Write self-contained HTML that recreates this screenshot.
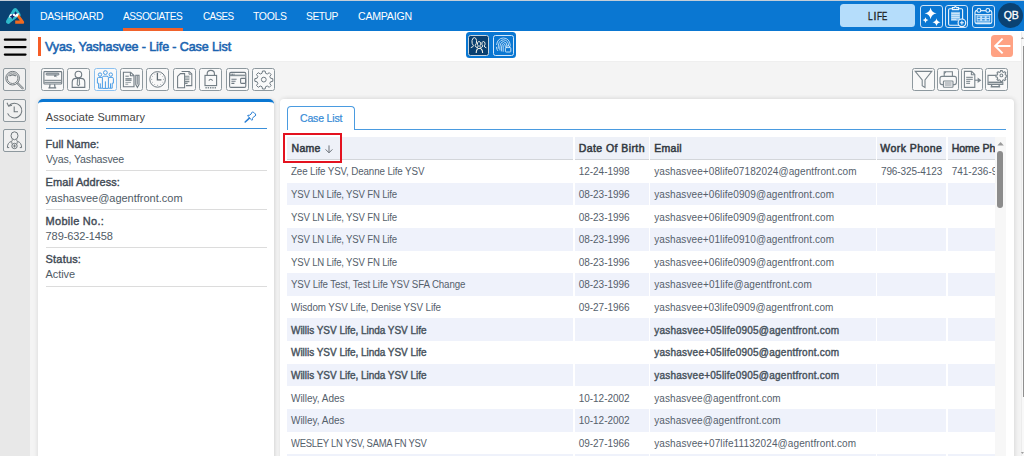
<!DOCTYPE html>
<html>
<head>
<meta charset="utf-8">
<style>
*{box-sizing:border-box;margin:0;padding:0}
html,body{width:1024px;height:456px;overflow:hidden;background:#f4f4f4;font-family:"Liberation Sans",sans-serif;position:relative}
.a{position:absolute}
.t{position:absolute;white-space:nowrap;line-height:1;font-family:"Liberation Sans",sans-serif}
svg{position:absolute;overflow:visible}
.tb{position:absolute;width:23px;height:23px;border:1.3px solid #8d989e;border-top-width:1.8px;border-bottom-width:1.8px;border-radius:2.5px;background:#f9f9f9;top:68.2px}
.sb{position:absolute;width:23px;height:23px;border:1.2px solid #8d989e;border-top-width:1.8px;border-bottom-width:1.8px;border-radius:2px;background:#f0f0f0;left:3px}
.cell{position:absolute}
</style>
</head>
<body>
<!-- top strip + nav -->
<div class="a" style="left:0;top:0;width:1024px;height:1px;background:#c4ced8"></div>
<div class="a" style="left:0;top:1px;width:1024px;height:30px;background:#0a77d2"></div>
<div class="a" style="left:0;top:1px;width:30px;height:30px;background:#0a4273"></div>
<!-- logo -->
<svg style="left:0;top:0" width="30" height="31" viewBox="0 0 30 31">
  <path d="M8.2 21.6 L14.6 10.8 Q15.2 9.8 15.8 10.8 L18.4 15" stroke="#2fbacb" stroke-width="4.4" fill="none" stroke-linecap="round" stroke-linejoin="round"/>
  <path d="M7.4 20.8 L9.4 17 L17.6 16.4 L15.6 18.2 L12 20.8 L9.2 22.8 Z" fill="#2fbacb" stroke="#2fbacb" stroke-width="1" stroke-linejoin="round"/>
  <path d="M18.4 13.8 L24 21.4 Q24.6 23.8 22.6 23.8 H15.2 V20.4 H19.8 L16.9 16.4 Z" fill="#f26b1f"/>
  <path d="M8.8 17.4 L10 14.2 L19 13.2 L17.8 16.4 Z" fill="#ffffff"/>
  <path d="M12.3 13.8 Q12.6 16.2 15 16.6 Q12.6 17 12.3 19.4 Q12 17 9.6 16.6 Q12 16.2 12.3 13.8Z" fill="#13246b"/>
  <path d="M15.6 10.9 Q15.8 12.8 17.6 13.1 Q15.8 13.4 15.6 15.3 Q15.4 13.4 13.6 13.1 Q15.4 12.8 15.6 10.9Z" fill="#13246b"/>
</svg>
<!-- active underline -->
<div class="a" style="left:123.4px;top:28px;width:59.4px;height:3px;background:#f0622c"></div>
<!-- LIFE pill -->
<div class="a" style="left:839.7px;top:3.7px;width:75.5px;height:23.4px;background:#b5ddfb;border-radius:3.5px"></div>
<div class="t" style="left:867.7px;top:11px;font-size:10.5px;color:#1f1f1f;-webkit-text-stroke:0.3px #1f1f1f;transform:scaleX(0.8);transform-origin:0 0">L</div>
<div class="t" style="left:873.4px;top:11px;font-size:10.5px;color:#1f1f1f;-webkit-text-stroke:0.3px #1f1f1f">I</div>
<div class="t" style="left:876.7px;top:11px;font-size:10.5px;color:#1f1f1f;-webkit-text-stroke:0.3px #1f1f1f;transform:scaleX(0.8);transform-origin:0 0">F</div>
<div class="t" style="left:882.4px;top:11px;font-size:10.5px;color:#1f1f1f;-webkit-text-stroke:0.3px #1f1f1f;transform:scaleX(0.75);transform-origin:0 0">E</div>
<!-- nav icon buttons -->
<div class="a" style="left:920.2px;top:4.6px;width:23.2px;height:23.3px;border:1.2px solid #cfe4f8;border-radius:3px"></div>
<div class="a" style="left:945.4px;top:4.6px;width:22.9px;height:23.3px;border:1.2px solid #cfe4f8;border-radius:3px"></div>
<div class="a" style="left:972px;top:4.6px;width:22.8px;height:23.3px;border:1.2px solid #cfe4f8;border-radius:3px"></div>
<svg style="left:920.2px;top:4.6px" width="23" height="23" viewBox="0 0 23 23">
  <path d="M10.6 2.4 Q11.4 7.4 16.6 8.2 Q11.4 9 10.6 14.2 Q9.8 9 4.6 8.2 Q9.8 7.4 10.6 2.4Z" fill="#fff"/>
  <path d="M5.5 12.2 Q5.9 14.7 8.4 15.1 Q5.9 15.5 5.5 18 Q5.1 15.5 2.6 15.1 Q5.1 14.7 5.5 12.2Z" fill="#fff"/>
  <path d="M16.5 13.2 Q17 16.6 20.6 17.2 Q17 17.8 16.5 21.2 Q16 17.8 12.4 17.2 Q16 16.6 16.5 13.2Z" fill="#fff"/>
</svg>
<svg style="left:945.4px;top:4.6px" width="23" height="23" viewBox="0 0 23 23" fill="none" stroke="#eef6fd" stroke-width="1.1">
  <rect x="3.6" y="3.8" width="14" height="16.4" rx="1.2"/>
  <path d="M7.4 4.6 V2.6 H9.4 Q10.4 0.6 11.4 2.6 H13.6 V4.6 Z" fill="#0a77d2"/>
  <rect x="6" y="6.8" width="9" height="9" fill="#8cc4f0" stroke="none"/>
  <path d="M6.4 8.4h8.2M6.4 10.4h8.2M6.4 12.4h8.2M6.4 14.4h5" stroke="#e6f3fd" stroke-width="0.8"/>
  <circle cx="16.9" cy="17.8" r="3.8" fill="#0a77d2" stroke-width="1.2"/>
  <path d="M16.9 15.8v4M14.9 17.8h4" stroke-width="1.1"/>
</svg>
<svg style="left:972px;top:4.6px" width="23" height="23" viewBox="0 0 23 23" fill="none" stroke="#eaf4fd" stroke-width="1.1">
  <rect x="3" y="5.6" width="16.8" height="13" rx="1.8"/>
  <path d="M3.2 9.6 H19.6" stroke-width="1"/>
  <path d="M5.4 5.6 H17.4" stroke="#0a77d2" stroke-width="1.4"/>
  <path d="M8.8 5.6 H13.9" stroke-width="1"/>
  <circle cx="6.9" cy="5.4" r="1.9" fill="#0a77d2"/>
  <circle cx="15.8" cy="5.4" r="1.9" fill="#0a77d2"/>
  <rect x="4.6" y="10.4" width="13.6" height="6.2" fill="#bfe0fa" stroke="none"/>
  <path d="M5.6 11.4h2.6v1.6h-2.6zM10.1 11.4h2.6v1.6h-2.6zM14.6 11.4h2.6v1.6h-2.6zM5.6 14h2.6v1.6h-2.6zM10.1 14h2.6v1.6h-2.6zM14.6 14h2.6v1.6h-2.6z" fill="#3d94de" stroke="none"/>
  <path d="M4.2 17.8 H18.6" stroke-width="1.2" stroke="#bfe0fa"/>
</svg>
<!-- QB -->
<div class="a" style="left:998.2px;top:3.2px;width:25.2px;height:25.2px;border-radius:50%;background:#0a4273"></div>

<!-- sidebar -->
<div class="a" style="left:0;top:31px;width:30px;height:425px;background:#e8e8e8"></div>
<svg style="left:0;top:31px" width="30" height="30" viewBox="0 31 30 30">
  <path d="M4.9 39.7 H25.5 M4.9 47.05 H25.5 M4.9 54.6 H25.5" stroke="#000" stroke-width="2.3" stroke-linecap="round"/>
</svg>
<div class="sb" style="top:68px"></div>
<div class="sb" style="top:98.6px"></div>
<div class="sb" style="top:129px"></div>
<svg style="left:3px;top:68px" width="23" height="23" viewBox="0 0 23 23" fill="none" stroke="#6f777c" stroke-width="1">
  <circle cx="9.6" cy="10.2" r="6.8"/>
  <circle cx="9.6" cy="10.2" r="5.3" stroke-width="0.9"/>
  <path d="M6.4 8 Q9.6 5.6 12.8 8" stroke-width="1.3"/>
  <path d="M14.6 15.2 L19.6 20.2" stroke-width="2.2" stroke-linecap="round"/>
  <path d="M14.6 15.2 L19.6 20.2" stroke-width="0.8" stroke="#f2f2f2" stroke-linecap="round"/>
</svg>
<svg style="left:3px;top:98.6px" width="23" height="23" viewBox="0 0 23 23" fill="none" stroke="#6f777c" stroke-width="1.05">
  <path d="M5.6 7 A7.4 7.4 0 1 1 4.6 14.4"/>
  <path d="M4 3.8 L5.6 7.2 L9 6.2"/>
  <path d="M11.2 7.4 V12.8 H15"/>
</svg>
<svg style="left:3px;top:129px" width="23" height="23" viewBox="0 0 23 23" fill="none" stroke="#6f777c" stroke-width="1">
  <path d="M11.5 2.8 Q15 2.8 15 6.8 Q15 10.2 11.5 10.8 Q8 10.2 8 6.8 Q8 2.8 11.5 2.8 Z"/>
  <path d="M9.2 10.4 Q9.4 12 8.6 12.4 Q4.4 13.4 4.4 18.6 H6.2"/>
  <path d="M13.8 10.4 Q13.6 12 14.4 12.4 Q18.6 13.4 18.6 18.6 H16.8"/>
  <path d="M8.8 12.6 Q8.6 14.6 9.4 15.4 M14.2 12.6 Q14.4 14.6 13.6 15.4" stroke-width="0.9"/>
  <circle cx="11.5" cy="17" r="2.7"/>
  <path d="M11.5 15.4v3.2M9.9 17h3.2" stroke-width="0.9"/>
</svg>

<!-- title bar -->
<div class="a" style="left:30px;top:31px;width:994px;height:30px;background:#ffffff;box-shadow:0 0.5px 1.5px rgba(0,0,0,0.06)"></div>
<div class="a" style="left:37.8px;top:36.8px;width:3.2px;height:19px;background:#f65d27"></div>
<!-- center switch -->
<div class="a" style="left:465.5px;top:32.3px;width:50.6px;height:25.5px;background:#0a77d2;border-radius:3.5px"></div>
<div class="a" style="left:468.1px;top:34.8px;width:20.9px;height:20.9px;background:#093f70;border:1.1px solid #c8d4de;border-radius:2.5px"></div>
<div class="a" style="left:492.8px;top:34.8px;width:21px;height:20.9px;background:#0a77d2;border:1.1px solid #d4e8fa;border-radius:2.5px"></div>
<svg style="left:468.1px;top:34.8px" width="21" height="21" viewBox="0 0 21 21" fill="none" stroke="#f4f1e6" stroke-width="1">
  <path d="M2.8 12.6 Q5.2 12.2 5.4 10.6 Q3.6 8.6 4 5.6 Q4.6 2.6 6.4 2.6 Q8.2 2.8 8.6 5.6 Q8.8 8.6 7.2 10.6 Q7.4 12.2 9.4 12.6"/>
  <path d="M8.8 12.8 Q10.4 12.2 10.2 10.9 Q9 9.4 9.6 7.7 Q10.2 6.3 11.2 6.5 Q12.4 6.7 12.6 8.3 Q12.8 9.9 11.8 10.9 Q11.8 12.2 13 12.6"/>
  <path d="M13.2 12.6 Q14.6 12.2 14.6 10.9 Q13.4 9.4 14 7.7 Q14.6 6.3 15.6 6.5 Q16.8 6.7 17 8.3 Q17.2 9.9 16.2 10.9 Q16.2 12.2 18.4 12.8"/>
  <path d="M8.2 18 Q8.2 13.4 11.4 13.2 Q14.6 13.4 14.6 18" stroke-width="1.1"/>
</svg>
<svg style="left:492.8px;top:34.8px" width="21" height="21" viewBox="0 0 21 21" fill="none" stroke="#d6ebfc" stroke-width="0.85" stroke-linecap="round">
  <path d="M3.6 9.6 Q4.4 3.2 10.4 3 Q16.4 3.2 17.2 9.6"/>
  <path d="M3.4 12.2 Q3.6 14.4 4.6 15.6"/>
  <path d="M5.2 13.4 Q4.8 5.2 10.4 4.8 Q15.6 5.2 15.6 10.6"/>
  <path d="M6.8 15 Q6.4 7 10.4 6.6 Q14 7 14 10.8"/>
  <path d="M8.4 16 Q8.2 8.8 10.4 8.6 Q12.4 8.8 12.4 11.6"/>
  <path d="M10.2 16.4 V10.6"/>
  <path d="M16.4 12.2 Q16.6 10.8 17.2 10.4" />
  <rect x="12.4" y="12.6" width="5.4" height="4.4" rx="0.7" fill="#0a77d2" stroke-width="0.9"/>
  <path d="M13.4 12.6 V11.6 Q15.1 9.8 16.8 11.6 V12.6" stroke-width="0.9"/>
</svg>
<!-- back button -->
<div class="a" style="left:990.9px;top:34.6px;width:22.4px;height:22.5px;background:#ffa283;border-radius:3.5px"></div>
<svg style="left:990.9px;top:34.6px" width="22" height="22" viewBox="0 0 22 22" fill="none" stroke="#ffffff" stroke-width="2">
  <path d="M19.4 11 H4"/>
  <path d="M11.6 3.6 L4.2 11 L11.6 18.4"/>
</svg>
<!-- page scrollbar -->
<div class="a" style="left:1021px;top:32px;width:3px;height:424px;background:#f8f8f8;border-left:0.6px solid #ececec"></div>
<div class="a" style="left:1022.8px;top:45.8px;width:1.6px;height:351px;background:#8f8f8f"></div>
<svg style="left:1020px;top:34px" width="4" height="8" viewBox="0 0 4 8"><path d="M2.4 3 L4 5 L0.8 5 Z" fill="#a0a0a0"/></svg>
<svg style="left:1020px;top:448px" width="4" height="8" viewBox="0 0 4 8"><path d="M2.4 6 L4 4 L0.8 4 Z" fill="#a0a0a0"/></svg>

<!-- toolbar buttons -->
<div class="tb" style="left:40.8px"></div>
<div class="tb" style="left:67.2px"></div>
<div class="tb" style="left:93.6px;border-color:#8cc0ee"></div>
<div class="tb" style="left:120px"></div>
<div class="tb" style="left:146.4px"></div>
<div class="tb" style="left:172.8px"></div>
<div class="tb" style="left:199.2px"></div>
<div class="tb" style="left:225.6px"></div>
<div class="tb" style="left:252px"></div>
<!-- icons -->
<svg style="left:40.8px;top:68.2px" width="23" height="23" viewBox="0 0 23 23" fill="none" stroke="#6f7a82" stroke-width="1.1">
  <rect x="2.9" y="3.6" width="17.8" height="12.4" rx="0.8"/>
  <path d="M3.2 12.4 H20.4 M3.2 14.4 H20.4" stroke-width="1.2" stroke="#8a949a"/>
  <rect x="5" y="5.2" width="13" height="1.8" rx="0.9" stroke-width="1" fill="#c9ced2"/>
  <path d="M13.8 7.4 L15.6 9.2 M13.8 7.4 v1.6 M13.8 7.4 h1.6" stroke-width="1"/>
  <path d="M9 16.2 L8.6 19.6 M13.6 16.2 L14 19.6 M7.4 19.8 H15.2" stroke-width="1.2"/>
</svg>
<svg style="left:67.2px;top:68.2px" width="23" height="23" viewBox="0 0 23 23" fill="none" stroke="#6f7a82" stroke-width="1.1">
  <circle cx="11.4" cy="6.6" r="3.3"/>
  <path d="M5.2 19.4 V14.2 Q5.2 10.4 9.2 10.4 H13.8 Q17.8 10.4 17.8 14.2 V19.4 Z"/>
  <path d="M10.6 10.8 L10.2 16.6 L11.4 17.8 L12.6 16.6 L12.2 10.8" stroke="#7f8a90"/>
</svg>
<svg style="left:93.6px;top:68.2px" width="23" height="23" viewBox="0 0 23 23" fill="none" stroke="#4a9de6" stroke-width="1">
  <circle cx="11.4" cy="4.6" r="1.9"/>
  <circle cx="6" cy="6.6" r="1.7"/>
  <circle cx="16.8" cy="6.6" r="1.7"/>
  <path d="M8.4 20.4 V9.6 Q8.4 8.2 9.8 8.2 H13 Q14.4 8.2 14.4 9.6 V20.4 H8.4 M11.4 13.4 V20.4"/>
  <path d="M8 9.4 H4.6 Q3.4 9.4 3.4 10.8 V15.2 H4.6 V20.2 H8 M6.3 15.4 V20.2"/>
  <path d="M14.8 9.4 H18.2 Q19.4 9.4 19.4 10.8 V15.2 H18.2 V20.2 H14.8 M16.5 15.4 V20.2"/>
</svg>
<svg style="left:120px;top:68.2px" width="23" height="23" viewBox="0 0 23 23" fill="none" stroke="#6f7a82" stroke-width="1.1">
  <path d="M3.4 4.2 H10.6 L14 7.6 V18.8 H3.4 Z"/>
  <path d="M10.4 4.4 V7.8 H13.8"/>
  <path d="M5.4 8.2 H8.8" stroke-width="1"/>
  <path d="M5.4 10.6 H11.6 M5.4 12.2 H11.6" stroke="#8a949a" stroke-width="1.4"/>
  <path d="M5.4 14.4 H11" stroke="#9aa3a8" stroke-width="1"/>
  <path d="M5.4 16.2 H8.2" stroke="#8a949a" stroke-width="1"/>
  <path d="M15.8 7.2 H19 V16.6 L17.4 19.4 L15.8 16.6 Z"/>
  <path d="M17.4 7.4 V16.6" stroke-width="0.8"/>
</svg>
<svg style="left:146.4px;top:68.2px" width="23" height="23" viewBox="0 0 23 23" fill="none" stroke="#6f7a82" stroke-width="1">
  <circle cx="11.6" cy="11.4" r="7.8"/>
  <path d="M11.6 4.8 v1.2 M11.6 16.8 v1.2 M5 11.4 h1.2 M17 11.4 h1.2 M8.3 5.7 l0.5 0.9 M14.9 5.7 l-0.5 0.9 M8.3 17.1 l0.5 -0.9 M14.9 17.1 l-0.5 -0.9 M5.9 8.1 l0.9 0.5 M17.3 8.1 l-0.9 0.5 M5.9 14.7 l0.9 -0.5 M17.3 14.7 l-0.9 -0.5" stroke-width="0.8" stroke="#8f989e"/>
  <path d="M11.4 4.8 V11.8 H15.4" stroke-width="1.3" stroke="#5f6b73"/>
</svg>
<svg style="left:172.8px;top:68.2px" width="23" height="23" viewBox="0 0 23 23" fill="none" stroke="#6f7a82" stroke-width="1.05">
  <path d="M8.6 3.4 H16.2 L18.8 6 V17.6 H13"/>
  <path d="M16 3.6 V6.2 H18.6" stroke-width="0.9"/>
  <path d="M4.6 8.4 L7.4 5.6 H11.6 V19.8 H4.6 Z" fill="#fbfbfb"/>
  <path d="M11.8 8.2 H16.4 M11.8 10 H16.6 M11.8 11.8 H16.4 M11.8 13.6 H16.4 M11.8 15.4 H14.6" stroke-width="1.1" stroke="#7f8a90"/>
</svg>
<svg style="left:199.2px;top:68.2px" width="23" height="23" viewBox="0 0 23 23" fill="none" stroke="#6f7a82" stroke-width="1.1">
  <path d="M8.2 7.4 V5.6 Q8.2 2.4 11.8 2.4 Q15.4 2.4 15.4 5.6 V7.4"/>
  <rect x="6" y="7.4" width="11.6" height="10.2"/>
  <path d="M9.8 12.6 Q11.7 9.8 13.6 12.6"/>
  <path d="M6.4 19.7 H17.4" stroke-dasharray="1.4 0.9" stroke-width="1.4" stroke="#7f8a90"/>
</svg>
<svg style="left:225.6px;top:68.2px" width="23" height="23" viewBox="0 0 23 23" fill="none" stroke="#6f7a82" stroke-width="1.1">
  <rect x="3.6" y="4.4" width="16.2" height="15" rx="1.4"/>
  <path d="M3.8 7.4 H19.6" stroke-width="1.6" stroke="#8a949a"/>
  <path d="M5 5.6 v1.8 M6.4 5.6 v1.8 M8 5.6 v1.8" stroke-width="0.9"/>
  <path d="M5.4 11.2 H10.6 M5.4 13.2 H9.6 M5.4 15.4 H8.4" stroke-width="1.1"/>
  <rect x="14.6" y="10.4" width="5" height="5" rx="0.8"/>
</svg>
<svg style="left:252px;top:68.2px" width="23" height="23" viewBox="0 0 23 23" fill="none" stroke="#6f7a82" stroke-width="1">
  <path d="M10.5 3 h2.6 l0.5 2.3 l1.7 0.7 l2 -1.3 l1.8 1.8 l-1.3 2 l0.7 1.7 l2.3 0.5 v2.6 l-2.3 0.5 l-0.7 1.7 l1.3 2 l-1.8 1.8 l-2 -1.3 l-1.7 0.7 l-0.5 2.3 h-2.6 l-0.5 -2.3 l-1.7 -0.7 l-2 1.3 l-1.8 -1.8 l1.3 -2 l-0.7 -1.7 l-2.3 -0.5 v-2.6 l2.3 -0.5 l0.7 -1.7 l-1.3 -2 l1.8 -1.8 l2 1.3 l1.7 -0.7 Z" stroke-linejoin="round"/>
  <circle cx="11.8" cy="11.6" r="2.4"/>
</svg>
<!-- right toolbar -->
<div class="tb" style="left:911.9px;width:23px"></div>
<div class="tb" style="left:936.6px;width:22.4px"></div>
<div class="tb" style="left:960.9px;width:22.4px"></div>
<div class="tb" style="left:985.3px;width:22.7px"></div>
<svg style="left:911.9px;top:68.2px" width="23" height="23" viewBox="0 0 23 23" fill="none" stroke="#7a858c" stroke-width="1.1">
  <path d="M3.2 3.4 H19.8 L13 12 V19.4 L10.2 17.6 V12 Z"/>
</svg>
<svg style="left:936.6px;top:68.2px" width="23" height="23" viewBox="0 0 23 23" fill="none" stroke="#7a858c" stroke-width="1.1">
  <path d="M7.2 8.4 V3.8 H15.4 V8.4"/>
  <path d="M7.2 5.6 L8.8 3.8"/>
  <rect x="3" y="8.4" width="16.4" height="8.2" rx="2"/>
  <rect x="6.4" y="13" width="9.6" height="6.2" rx="0.8" fill="#f9f9f9"/>
  <path d="M7.8 15 H14.6 M7.8 17 H14.6" stroke-width="0.9"/>
</svg>
<svg style="left:960.9px;top:68.2px" width="23" height="23" viewBox="0 0 23 23" fill="none" stroke="#7a858c" stroke-width="1.1">
  <path d="M3.4 3.4 H10.6 L13.8 6.6 V19.4 H3.4 Z"/>
  <path d="M10.4 3.6 V6.8 H13.6"/>
  <path d="M5.2 9.4 H11.8 M5.2 11.4 H11.8 M5.2 13.4 H9.2 M5.2 15.4 H9" stroke-width="1.1" stroke="#8a949a"/>
  <path d="M13.8 12.2 H18.6"/>
  <path d="M17.2 10.6 L19.4 12.2 L17.2 13.8 Z" fill="#7a858c"/>
</svg>
<svg style="left:985.3px;top:68.2px" width="23" height="23" viewBox="0 0 23 23" fill="none" stroke="#7a858c" stroke-width="1.1">
  <path d="M13 7.4 H3 V16.4 H17.8 V13.6"/>
  <path d="M3.2 14.4 H17.6" stroke-width="1.6"/>
  <path d="M6.6 16.4 V18.6 H14.2 V16.4 M5.6 18.8 H15.2" stroke-width="1.3"/>
  <path d="M15.6 2.6 h1.6 l0.3 1.3 l1 0.5 l1.2 -0.7 l1.1 1.1 l-0.7 1.2 l0.5 1 l1.3 0.3 v1.6 l-1.3 0.3 l-0.5 1 l0.7 1.2 l-1.1 1.1 l-1.2 -0.7 l-1 0.5 l-0.3 1.3 h-1.6 l-0.3 -1.3 l-1 -0.5 l-1.2 0.7 l-1.1 -1.1 l0.7 -1.2 l-0.5 -1 l-1.3 -0.3 v-1.6 l1.3 -0.3 l0.5 -1 l-0.7 -1.2 l1.1 -1.1 l1.2 0.7 l1 -0.5 Z" fill="#f9f9f9"/>
  <circle cx="16.4" cy="7.4" r="1.4"/>
</svg>

<!-- left panel -->
<div class="a" style="left:37.7px;top:98.9px;width:236.6px;height:400px;background:#fff;border-top:3.6px solid #0a77d2;border-radius:5px 5px 0 0;box-shadow:-1px 0 4px rgba(0,0,0,0.09), 2px 0 3px rgba(0,0,0,0.07)"></div>
<svg style="left:244px;top:111px" width="13" height="12" viewBox="0 0 13 12" fill="none" stroke="#2a7fd4" stroke-width="1">
  <path d="M7.6 1.6 Q8.6 0.6 9.8 1.4 L11.4 3 Q12.2 4.2 11.2 5 L9.8 5.6 L8.4 7.6 L8.6 8.8 L7.8 9.2 L3.6 5 L4 4.2 L5.2 4.4 L7.2 3 Z"/>
  <path d="M5.4 7.2 L1.2 11" stroke-width="1.6" stroke-linecap="round"/>
</svg>
<div class="a" style="left:45.6px;top:127.9px;width:221.4px;height:1.3px;background:#3a8fd9"></div>
<div class="a" style="left:45.6px;top:170.4px;width:221px;height:1px;background:#dcdcdc"></div>
<div class="a" style="left:45.6px;top:208.8px;width:221px;height:1px;background:#dcdcdc"></div>
<div class="a" style="left:45.6px;top:247.2px;width:221px;height:1px;background:#dcdcdc"></div>
<div class="a" style="left:45.6px;top:285.6px;width:221px;height:1px;background:#dcdcdc"></div>

<!-- main panel -->
<div class="a" style="left:280px;top:99px;width:733.5px;height:400px;background:#fff;border-radius:4px 4px 0 0;box-shadow:0 -1px 4px rgba(0,0,0,0.065), 2px 0 5px rgba(0,0,0,0.06)"></div>
<!-- tab -->
<div class="a" style="left:287px;top:106px;width:68px;height:24px;border:1.5px solid #4a9be0;border-bottom:none;border-radius:4px 4px 0 0;background:#fff"></div>
<div class="a" style="left:354px;top:128.7px;width:652px;height:1.5px;background:#4a9be0"></div>

<!-- table -->
<div class="a" style="left:287px;top:137px;width:285.80px;height:23px;background:#eef1f8;border-bottom:1px solid #d3d6da"></div>
<div class="a" style="left:574.8px;top:137px;width:73.90px;height:23px;background:#eef1f8;border-bottom:1px solid #d3d6da"></div>
<div class="a" style="left:650.3px;top:137px;width:225.80px;height:23px;background:#eef1f8;border-bottom:1px solid #d3d6da"></div>
<div class="a" style="left:877.4px;top:137px;width:69.10px;height:23px;background:#eef1f8;border-bottom:1px solid #d3d6da"></div>
<div class="a" style="left:948.3px;top:137px;width:46.30px;height:23px;background:#eef1f8;border-bottom:1px solid #d3d6da"></div>
<div class="a" style="left:287px;top:182.630px;width:285.80px;height:22.63px;background:#eff2fb"></div>
<div class="a" style="left:574.8px;top:182.630px;width:73.90px;height:22.63px;background:#eff2fb"></div>
<div class="a" style="left:650.3px;top:182.630px;width:225.80px;height:22.63px;background:#eff2fb"></div>
<div class="a" style="left:877.4px;top:182.630px;width:69.10px;height:22.63px;background:#eff2fb"></div>
<div class="a" style="left:948.3px;top:182.630px;width:46.30px;height:22.63px;background:#eff2fb"></div>
<div class="a" style="left:287px;top:227.890px;width:285.80px;height:22.63px;background:#eff2fb"></div>
<div class="a" style="left:574.8px;top:227.890px;width:73.90px;height:22.63px;background:#eff2fb"></div>
<div class="a" style="left:650.3px;top:227.890px;width:225.80px;height:22.63px;background:#eff2fb"></div>
<div class="a" style="left:877.4px;top:227.890px;width:69.10px;height:22.63px;background:#eff2fb"></div>
<div class="a" style="left:948.3px;top:227.890px;width:46.30px;height:22.63px;background:#eff2fb"></div>
<div class="a" style="left:287px;top:273.150px;width:285.80px;height:22.63px;background:#eff2fb"></div>
<div class="a" style="left:574.8px;top:273.150px;width:73.90px;height:22.63px;background:#eff2fb"></div>
<div class="a" style="left:650.3px;top:273.150px;width:225.80px;height:22.63px;background:#eff2fb"></div>
<div class="a" style="left:877.4px;top:273.150px;width:69.10px;height:22.63px;background:#eff2fb"></div>
<div class="a" style="left:948.3px;top:273.150px;width:46.30px;height:22.63px;background:#eff2fb"></div>
<div class="a" style="left:287px;top:318.410px;width:285.80px;height:22.63px;background:#eff2fb"></div>
<div class="a" style="left:574.8px;top:318.410px;width:73.90px;height:22.63px;background:#eff2fb"></div>
<div class="a" style="left:650.3px;top:318.410px;width:225.80px;height:22.63px;background:#eff2fb"></div>
<div class="a" style="left:877.4px;top:318.410px;width:69.10px;height:22.63px;background:#eff2fb"></div>
<div class="a" style="left:948.3px;top:318.410px;width:46.30px;height:22.63px;background:#eff2fb"></div>
<div class="a" style="left:287px;top:363.670px;width:285.80px;height:22.63px;background:#eff2fb"></div>
<div class="a" style="left:574.8px;top:363.670px;width:73.90px;height:22.63px;background:#eff2fb"></div>
<div class="a" style="left:650.3px;top:363.670px;width:225.80px;height:22.63px;background:#eff2fb"></div>
<div class="a" style="left:877.4px;top:363.670px;width:69.10px;height:22.63px;background:#eff2fb"></div>
<div class="a" style="left:948.3px;top:363.670px;width:46.30px;height:22.63px;background:#eff2fb"></div>
<div class="a" style="left:287px;top:408.930px;width:285.80px;height:22.63px;background:#eff2fb"></div>
<div class="a" style="left:574.8px;top:408.930px;width:73.90px;height:22.63px;background:#eff2fb"></div>
<div class="a" style="left:650.3px;top:408.930px;width:225.80px;height:22.63px;background:#eff2fb"></div>
<div class="a" style="left:877.4px;top:408.930px;width:69.10px;height:22.63px;background:#eff2fb"></div>
<div class="a" style="left:948.3px;top:408.930px;width:46.30px;height:22.63px;background:#eff2fb"></div>
<div class="a" style="left:287px;top:454.190px;width:285.80px;height:22.63px;background:#eff2fb"></div>
<div class="a" style="left:574.8px;top:454.190px;width:73.90px;height:22.63px;background:#eff2fb"></div>
<div class="a" style="left:650.3px;top:454.190px;width:225.80px;height:22.63px;background:#eff2fb"></div>
<div class="a" style="left:877.4px;top:454.190px;width:69.10px;height:22.63px;background:#eff2fb"></div>
<div class="a" style="left:948.3px;top:454.190px;width:46.30px;height:22.63px;background:#eff2fb"></div>
<svg style="left:0;top:0" width="1024" height="456" viewBox="0 0 1024 456">
  <path d="M329 145.4 V152.8 M325.6 149.4 L329 152.8 L332.4 149.4" stroke="#6b7178" stroke-width="1" fill="none"/>
</svg>
<!-- red annotation box -->
<div class="a" style="left:283.2px;top:133px;width:58.6px;height:29.9px;border:2.8px solid #e3121f"></div>
<!-- table scrollbar -->
<div class="a" style="left:994.7px;top:137px;width:11px;height:320px;background:#f7f7f7"></div>
<svg style="left:994.7px;top:140px" width="11" height="8" viewBox="0 0 11 8"><path d="M2.4 5.4 L5.6 2 L8.8 5.4 Z" fill="#9a9a9a"/></svg>
<div class="a" style="left:997.1px;top:150.7px;width:6.4px;height:57.5px;background:#8c8c8c;border-radius:3.2px"></div>

<div class="t" style="transform:scaleX(0.9504);transform-origin:0 0;left:40.30px;top:11.00px;font-size:11px;font-weight:400;color:#ffffff;letter-spacing:-0.366px;">DASHBOARD</div>
<div class="t" style="transform:scaleX(0.9218);transform-origin:0 0;left:123.40px;top:11.00px;font-size:11px;font-weight:400;color:#ffffff;letter-spacing:-0.504px;">ASSOCIATES</div>
<div class="t" style="transform:scaleX(0.8981);transform-origin:0 0;left:203.00px;top:11.00px;font-size:11px;font-weight:400;color:#ffffff;letter-spacing:-0.690px;">CASES</div>
<div class="t" style="transform:scaleX(0.9506);transform-origin:0 0;left:253.00px;top:11.00px;font-size:11px;font-weight:400;color:#ffffff;letter-spacing:-0.349px;">TOOLS</div>
<div class="t" style="transform:scaleX(0.9318);transform-origin:0 0;left:306.00px;top:11.00px;font-size:11px;font-weight:400;color:#ffffff;letter-spacing:-0.469px;">SETUP</div>
<div class="t" style="transform:scaleX(0.9636);transform-origin:0 0;left:357.80px;top:11.00px;font-size:11px;font-weight:400;color:#ffffff;letter-spacing:-0.254px;">CAMPAIGN</div>
<div class="t" style="left:1003.70px;top:10.00px;font-size:10.5px;font-weight:400;-webkit-text-stroke:0.3px #ffffff;color:#ffffff;letter-spacing:0.014px;">QB</div>
<div class="t" style="transform:scaleX(0.9791);transform-origin:0 0;left:45.30px;top:41.00px;font-size:12.8px;font-weight:400;-webkit-text-stroke:0.55px #1b64b0;color:#1b64b0;letter-spacing:-0.117px;">Vyas, Yashasvee - Life - Case List</div>
<div class="t" style="left:45.80px;top:112.00px;font-size:11px;font-weight:400;color:#444444;letter-spacing:0.087px;">Associate Summary</div>
<div class="t" style="left:45.60px;top:139.00px;font-size:11px;font-weight:400;-webkit-text-stroke:0.4px #3f4a55;color:#3f4a55;letter-spacing:0.041px;">Full Name:</div>
<div class="t" style="transform:scaleX(0.9661);transform-origin:0 0;left:45.60px;top:154.00px;font-size:11px;font-weight:400;color:#505b66;letter-spacing:-0.183px;">Vyas, Yashasvee</div>
<div class="t" style="left:45.60px;top:177.00px;font-size:11px;font-weight:400;-webkit-text-stroke:0.4px #3f4a55;color:#3f4a55;letter-spacing:0.066px;">Email Address:</div>
<div class="t" style="left:45.60px;top:193.00px;font-size:11px;font-weight:400;color:#505b66;letter-spacing:-0.006px;">yashasvee@agentfront.com</div>
<div class="t" style="left:45.60px;top:216.00px;font-size:11px;font-weight:400;-webkit-text-stroke:0.4px #3f4a55;color:#3f4a55;letter-spacing:0.260px;">Mobile No.:</div>
<div class="t" style="left:45.60px;top:231.00px;font-size:11px;font-weight:400;color:#505b66;letter-spacing:-0.101px;">789-632-1458</div>
<div class="t" style="left:45.60px;top:254.00px;font-size:11px;font-weight:400;-webkit-text-stroke:0.4px #3f4a55;color:#3f4a55;letter-spacing:0.179px;">Status:</div>
<div class="t" style="left:45.60px;top:269.00px;font-size:11px;font-weight:400;color:#505b66;letter-spacing:-0.078px;">Active</div>
<div class="t" style="transform:scaleX(0.9584);transform-origin:0 0;left:300.00px;top:113.00px;font-size:11px;font-weight:400;-webkit-text-stroke:0.2px #358ad6;color:#358ad6;letter-spacing:-0.203px;">Case List</div>
<div class="t" style="left:291.50px;top:143.00px;font-size:10.5px;font-weight:400;-webkit-text-stroke:0.5px #333a42;color:#333a42;letter-spacing:0.296px;">Name</div>
<div class="t" style="left:578.70px;top:143.00px;font-size:10.5px;font-weight:400;-webkit-text-stroke:0.5px #333a42;color:#333a42;letter-spacing:0.431px;">Date Of Birth</div>
<div class="t" style="left:654.20px;top:143.00px;font-size:10.5px;font-weight:400;-webkit-text-stroke:0.5px #333a42;color:#333a42;letter-spacing:0.307px;">Email</div>
<div class="t" style="left:880.30px;top:143.00px;font-size:10.5px;font-weight:400;-webkit-text-stroke:0.5px #333a42;color:#333a42;letter-spacing:0.441px;">Work Phone</div>
<div class="a" style="left:949px;top:141.00px;width:45.5px;height:16.5px;overflow:hidden"><div class="t" style="left:2.70px;top:2px;font-size:10.5px;font-weight:400;-webkit-text-stroke:0.5px #333a42;color:#333a42;letter-spacing:0.000px;">Home Phone</div></div>
<div class="t" style="transform:scaleX(0.9758);transform-origin:0 0;left:291.00px;top:167.00px;font-size:10px;font-weight:400;color:#55606b;letter-spacing:-0.114px;">Zee Life YSV, Deanne Life YSV</div>
<div class="t" style="left:578.70px;top:167.00px;font-size:10px;font-weight:400;color:#55606b;letter-spacing:-0.026px;">12-24-1998</div>
<div class="t" style="left:654.20px;top:167.00px;font-size:10px;font-weight:400;color:#55606b;letter-spacing:0.092px;">yashasvee+08life07182024@agentfront.com</div>
<div class="t" style="left:880.90px;top:167.00px;font-size:10px;font-weight:400;color:#55606b;letter-spacing:-0.073px;">796-325-4123</div>
<div class="a" style="left:949px;top:165.00px;width:45.5px;height:16px;overflow:hidden"><div class="t" style="left:2.70px;top:2px;font-size:10px;font-weight:400;color:#55606b;letter-spacing:0.000px;">741-236-9874</div></div>
<div class="t" style="transform:scaleX(0.9593);transform-origin:0 0;left:291.00px;top:190.00px;font-size:10px;font-weight:400;color:#55606b;letter-spacing:-0.187px;">YSV LN Life, YSV FN Life</div>
<div class="t" style="left:578.70px;top:190.00px;font-size:10px;font-weight:400;color:#55606b;letter-spacing:-0.026px;">08-23-1996</div>
<div class="t" style="left:654.20px;top:190.00px;font-size:10px;font-weight:400;color:#55606b;letter-spacing:0.096px;">yashasvee+06life0909@agentfront.com</div>
<div class="t" style="transform:scaleX(0.9593);transform-origin:0 0;left:291.00px;top:213.00px;font-size:10px;font-weight:400;color:#55606b;letter-spacing:-0.187px;">YSV LN Life, YSV FN Life</div>
<div class="t" style="left:578.70px;top:213.00px;font-size:10px;font-weight:400;color:#55606b;letter-spacing:-0.026px;">08-23-1996</div>
<div class="t" style="left:654.20px;top:213.00px;font-size:10px;font-weight:400;color:#55606b;letter-spacing:0.096px;">yashasvee+06life0909@agentfront.com</div>
<div class="t" style="transform:scaleX(0.9593);transform-origin:0 0;left:291.00px;top:235.00px;font-size:10px;font-weight:400;color:#55606b;letter-spacing:-0.187px;">YSV LN Life, YSV FN Life</div>
<div class="t" style="left:578.70px;top:235.00px;font-size:10px;font-weight:400;color:#55606b;letter-spacing:-0.026px;">08-23-1996</div>
<div class="t" style="left:654.20px;top:235.00px;font-size:10px;font-weight:400;color:#55606b;letter-spacing:0.096px;">yashasvee+01life0910@agentfront.com</div>
<div class="t" style="transform:scaleX(0.9593);transform-origin:0 0;left:291.00px;top:258.00px;font-size:10px;font-weight:400;color:#55606b;letter-spacing:-0.187px;">YSV LN Life, YSV FN Life</div>
<div class="t" style="left:578.70px;top:258.00px;font-size:10px;font-weight:400;color:#55606b;letter-spacing:-0.026px;">08-23-1996</div>
<div class="t" style="left:654.20px;top:258.00px;font-size:10px;font-weight:400;color:#55606b;letter-spacing:0.096px;">yashasvee+06life0909@agentfront.com</div>
<div class="t" style="transform:scaleX(0.9729);transform-origin:0 0;left:291.00px;top:280.00px;font-size:10px;font-weight:400;color:#55606b;letter-spacing:-0.125px;">YSV Life Test, Test Life YSV SFA Change</div>
<div class="t" style="left:578.70px;top:280.00px;font-size:10px;font-weight:400;color:#55606b;letter-spacing:-0.026px;">08-23-1996</div>
<div class="t" style="left:654.20px;top:280.00px;font-size:10px;font-weight:400;color:#55606b;letter-spacing:0.106px;">yashasvee+01life@agentfront.com</div>
<div class="t" style="transform:scaleX(0.9809);transform-origin:0 0;left:291.00px;top:303.00px;font-size:10px;font-weight:400;color:#55606b;letter-spacing:-0.091px;">Wisdom YSV Life, Denise YSV Life</div>
<div class="t" style="left:578.70px;top:303.00px;font-size:10px;font-weight:400;color:#55606b;letter-spacing:-0.026px;">09-27-1966</div>
<div class="t" style="left:654.20px;top:303.00px;font-size:10px;font-weight:400;color:#55606b;letter-spacing:0.076px;">yashasvee+03life0909@agentfront.com</div>
<div class="t" style="left:291.00px;top:326.00px;font-size:10px;font-weight:400;-webkit-text-stroke:0.4px #47525c;color:#47525c;letter-spacing:-0.028px;">Willis YSV Life, Linda YSV Life</div>
<div class="t" style="left:654.20px;top:326.00px;font-size:10px;font-weight:400;-webkit-text-stroke:0.4px #47525c;color:#47525c;letter-spacing:0.244px;">yashasvee+05life0905@agentfront.com</div>
<div class="t" style="left:291.00px;top:348.00px;font-size:10px;font-weight:400;-webkit-text-stroke:0.4px #47525c;color:#47525c;letter-spacing:-0.028px;">Willis YSV Life, Linda YSV Life</div>
<div class="t" style="left:654.20px;top:348.00px;font-size:10px;font-weight:400;-webkit-text-stroke:0.4px #47525c;color:#47525c;letter-spacing:0.244px;">yashasvee+05life0905@agentfront.com</div>
<div class="t" style="left:291.00px;top:371.00px;font-size:10px;font-weight:400;-webkit-text-stroke:0.4px #47525c;color:#47525c;letter-spacing:-0.028px;">Willis YSV Life, Linda YSV Life</div>
<div class="t" style="left:654.20px;top:371.00px;font-size:10px;font-weight:400;-webkit-text-stroke:0.4px #47525c;color:#47525c;letter-spacing:0.244px;">yashasvee+05life0905@agentfront.com</div>
<div class="t" style="left:291.00px;top:394.00px;font-size:10px;font-weight:400;color:#55606b;letter-spacing:-0.020px;">Willey, Ades</div>
<div class="t" style="left:578.70px;top:394.00px;font-size:10px;font-weight:400;color:#55606b;letter-spacing:-0.026px;">10-12-2002</div>
<div class="t" style="left:654.20px;top:394.00px;font-size:10px;font-weight:400;color:#55606b;letter-spacing:0.080px;">yashasvee@agentfront.com</div>
<div class="t" style="left:291.00px;top:416.00px;font-size:10px;font-weight:400;color:#55606b;letter-spacing:-0.020px;">Willey, Ades</div>
<div class="t" style="left:578.70px;top:416.00px;font-size:10px;font-weight:400;color:#55606b;letter-spacing:-0.026px;">10-12-2002</div>
<div class="t" style="left:654.20px;top:416.00px;font-size:10px;font-weight:400;color:#55606b;letter-spacing:0.080px;">yashasvee@agentfront.com</div>
<div class="t" style="transform:scaleX(0.9465);transform-origin:0 0;left:291.00px;top:439.00px;font-size:10px;font-weight:400;color:#55606b;letter-spacing:-0.294px;">WESLEY LN YSV, SAMA FN YSV</div>
<div class="t" style="left:578.70px;top:439.00px;font-size:10px;font-weight:400;color:#55606b;letter-spacing:-0.026px;">09-27-1966</div>
<div class="t" style="left:654.20px;top:439.00px;font-size:10px;font-weight:400;color:#55606b;letter-spacing:0.117px;">yashasvee+07life11132024@agentfront.com</div>
</body>
</html>
